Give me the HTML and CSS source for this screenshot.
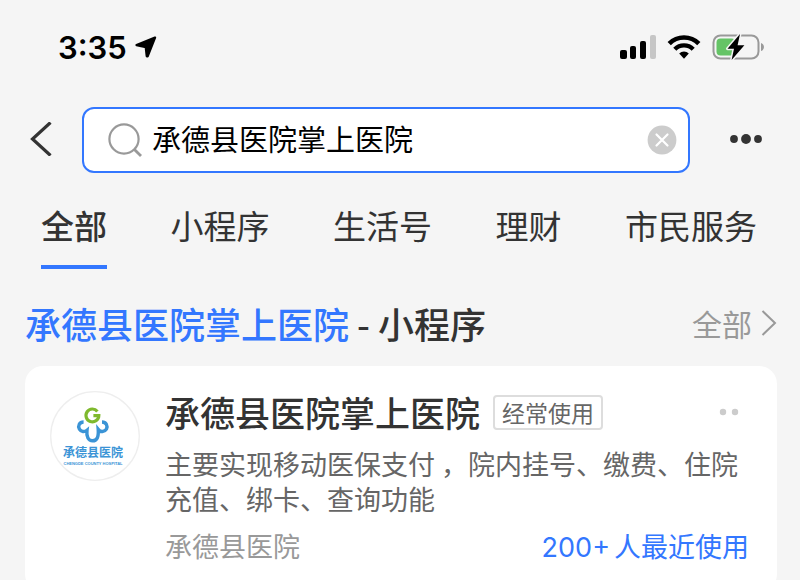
FILE: index.html
```
<!DOCTYPE html>
<html lang="zh-CN">
<head>
    <meta charset="UTF-8">
    <meta name="viewport" content="width=device-width, initial-scale=1.0">
    <title>承德县医院掌上医院 - 搜索</title>
    <link rel="stylesheet" href="styles.css">
</head>
<body>
<div class="app">
    <!-- 状态栏 -->
    <div class="status-bar">
        <div class="status-time">
            <span>3:35</span>
            <svg width="22" height="22" viewBox="0 0 22 22">
                <path d="M20 1.6 L1.6 9 L10.8 11.2 L11.8 20.2 L12.6 20.2 Z" fill="#000" stroke="#000" stroke-width="2.4" stroke-linejoin="round"/>
            </svg>
        </div>
        <div class="status-icons">
            <svg width="36" height="26" viewBox="0 0 36 26">
                <rect x="0" y="16" width="7" height="9" rx="2"/>
                <rect x="10" y="12" width="6" height="13" rx="2"/>
                <rect x="20" y="7" width="6" height="18" rx="2"/>
                <rect x="30" y="1" width="6" height="24" rx="2" fill="#c6c6c6"/>
            </svg>
            <svg width="34" height="26" viewBox="0 0 34 26">
                <path d="M2.2 9.6 A21 21 0 0 1 31.8 9.6" fill="none" stroke="#000" stroke-width="4.6"/>
                <path d="M7.8 15.2 A13 13 0 0 1 26.2 15.2" fill="none" stroke="#000" stroke-width="4.4"/>
                <path d="M12.2 19.6 A6.8 6.8 0 0 1 21.8 19.6 L17 24.8 Z"/>
            </svg>
            <svg width="52" height="28" viewBox="0 0 52 28">
                <rect x="1.5" y="2.5" width="45" height="23" rx="7" fill="none" stroke="#999" stroke-width="2"/>
                <path d="M49 10 Q52 11 52 14 Q52 17 49 18 Z" fill="#999"/>
                <rect x="4.5" y="5.5" width="19" height="17" rx="4" fill="#65c466"/>
                <path d="M28 1 L15.5 15.7 H22 L19.6 27 L32.4 12.3 H25.6 Z" fill="#000" stroke="#f5f5f5" stroke-width="3" stroke-linejoin="round" paint-order="stroke"/>
            </svg>
        </div>
    </div>

    <!-- 搜索栏 -->
    <form class="search-row">
        <button type="button" class="icon-button nav-button" aria-label="返回">
            <svg width="22" height="34" viewBox="0 0 22 34">
                <path d="M20.5 0.5 L2.5 17 L20.5 33.5" fill="none" stroke="#333" stroke-width="3.2"/>
            </svg>
        </button>
        <div class="search-box">
            <svg width="34" height="34" viewBox="0 0 34 34" fill="none" stroke="#999" stroke-width="2.2">
                <circle cx="16" cy="16" r="14.6"/>
                <path d="M26.4 26.4 L33 33" stroke-width="2.8"/>
            </svg>
            <input type="text" value="承德县医院掌上医院" aria-label="搜索">
            <button type="reset" class="icon-button" aria-label="清除">
                <svg width="30" height="30" viewBox="0 0 30 30">
                    <circle cx="15" cy="15" r="14.4" fill="#ccc"/>
                    <path d="M9.5 9.5 L20.5 20.5 M20.5 9.5 L9.5 20.5" stroke="#fff" stroke-width="2.2" stroke-linecap="round"/>
                </svg>
            </button>
        </div>
        <button type="button" class="icon-button nav-button" aria-label="更多">
            <svg width="32" height="12" viewBox="0 0 32 12" fill="#333">
                <circle cx="4" cy="6" r="3.9"/>
                <circle cx="16" cy="6" r="4.9"/>
                <circle cx="28" cy="6" r="3.9"/>
            </svg>
        </button>
    </form>

    <!-- 分类 -->
    <nav class="tabs">
        <button type="button" class="tab active">全部</button>
        <button type="button" class="tab">小程序</button>
        <button type="button" class="tab">生活号</button>
        <button type="button" class="tab">理财</button>
        <button type="button" class="tab">市民服务</button>
    </nav>

    <!-- 搜索结果 -->
    <section class="results">
        <div class="section-head">
            <h2><span class="keyword">承德县医院掌上医院</span> - 小程序</h2>
            <a href="#" class="more">全部
                <svg width="16" height="26" viewBox="0 0 16 26">
                    <path d="M1.5 1 L14 13 L1.5 25" fill="none" stroke="#999" stroke-width="2"/>
                </svg>
            </a>
        </div>

        <article class="card">
            <svg class="logo" width="90" height="90" viewBox="0 0 90 90">
                <circle cx="45" cy="45" r="44.3" fill="#fff" stroke="#eee" stroke-width="1.3"/>
                <path d="M47.4 20.4 A6.4 6.4 0 1 0 48.8 24.6 H43.4" fill="none" stroke="#7fb92d" stroke-width="3.2"/>
                <path d="M33.6 31 C29.4 31 27.6 35 29.4 38.2 C31 41 34.6 41.2 37 39.2 C36.2 46 38.4 49.8 42.6 49.8 C46.8 49.8 48.8 46.4 48.2 38.4 C50.6 41.4 54.6 41.2 56.4 38.2 C58 35 56.2 31 52 31" fill="none" stroke="#3b94d6" stroke-width="3.4"/>
                <text class="logo-name" x="43" y="66" text-anchor="middle">承德县医院</text>
                <text class="logo-sub" x="43" y="74" text-anchor="middle">CHENGDE COUNTY HOSPITAL</text>
            </svg>
            <div class="card-body">
                <div class="card-title">
                    <h3>承德县医院掌上医院</h3>
                    <span class="badge">经常使用</span>
                    <button type="button" class="icon-button card-more" aria-label="更多操作">
                        <svg width="20" height="8" viewBox="0 0 20 8" fill="#ccc">
                            <circle cx="4" cy="4" r="3.2"/>
                            <circle cx="16" cy="4" r="3.2"/>
                        </svg>
                    </button>
                </div>
                <p class="desc">主要实现移动医保支付 ，院内挂号、缴费、住院充值、绑卡、查询功能</p>
                <div class="card-foot">
                    <span>承德县医院</span>
                    <span class="usage"><span class="count">200+</span>人最近使用</span>
                </div>
            </div>
        </article>
    </section>
</div>
</body>
</html>
```
FILE: styles.css
```
* {
    box-sizing: border-box;
}
body {
    margin: 0;
    background-color: #f5f5f5;
    color: #333;
    font-family: "Noto Sans CJK SC", sans-serif;
}
h2, h3, p {
    margin: 0;
}
svg {
    display: block;
    flex: none;
}
button, input {
    padding: 0;
    border: none;
    background: none;
    color: inherit;
    font-family: inherit;
}
.app {
    height: 100vh;
    overflow: hidden;
}
.icon-button {
    flex: none;
    cursor: pointer;
}

/* 状态栏 */
.status-bar {
    display: flex;
    align-items: center;
    justify-content: space-between;
    height: 94px;
    margin-bottom: 13px;
    padding: 0 36px 0 58px;
}
.status-time {
    display: flex;
    align-items: center;
    gap: 8px;
    color: #000;
    font-family: Inter, sans-serif;
    font-size: 31px;
    font-weight: 600;
}
.status-icons {
    display: flex;
    align-items: center;
    gap: 11px;
}

/* 搜索栏 */
.search-row {
    display: flex;
    align-items: center;
    padding: 0 38px 0 30px;
}
.nav-button {
    padding-bottom: 3px;
}
.search-box {
    display: flex;
    flex: 1;
    align-items: center;
    gap: 10px;
    height: 66px;
    margin: 0 40px 0 30px;
    padding: 0 11px 0 24px;
    border: 2px solid #3377ff;
    border-radius: 12px;
    background-color: #fff;
}
.search-box input {
    flex: 1;
    min-width: 0;
    padding-bottom: 4px;
    color: #000;
    font-size: 29px;
    outline: none;
}

/* 分类 */
.tabs {
    display: flex;
    justify-content: space-between;
    margin: 30px 43px 32px 41px;
}
.tab {
    height: 66px;
    padding-bottom: 18px;
    border-bottom: 4px solid transparent;
    font-size: 33px;
    line-height: 44px;
    white-space: nowrap;
    cursor: pointer;
}
.tab.active {
    border-color: #3377ff;
    font-weight: 500;
}

/* 搜索结果 */
.results {
    padding: 0 23px 0 25px;
}
.section-head {
    display: flex;
    align-items: center;
    justify-content: space-between;
    margin-bottom: 21px;
}
h2, h3 {
    font-size: 36px;
    font-weight: 500;
    line-height: 44px;
    white-space: nowrap;
}
h3 {
    font-size: 35px;
}
.keyword {
    color: #3377ff;
}
.more {
    display: flex;
    align-items: center;
    gap: 9px;
    color: #999;
    font-size: 30px;
    line-height: 44px;
    text-decoration: none;
}
.card {
    display: flex;
    align-items: flex-start;
    gap: 25px;
    padding: 24px 28px 26px 25px;
    border-radius: 18px;
    background-color: #fff;
}
.logo {
    margin-top: 1px;
}
.logo-name {
    fill: #3b94d6;
    font-size: 12px;
    font-weight: 700;
}
.logo-sub {
    fill: #3b94d6;
    font-family: "Liberation Sans", sans-serif;
    font-size: 4px;
    font-weight: 700;
}
.card-body {
    flex: 1;
    min-width: 0;
}
.card-title {
    display: flex;
    align-items: center;
    gap: 13px;
}
.badge {
    padding: 0 7px;
    border: 2px solid #ddd;
    border-radius: 4px;
    color: #666;
    font-size: 23px;
    line-height: 31px;
    white-space: nowrap;
}
.card-more {
    margin-left: auto;
    margin-right: 10px;
}
.desc {
    margin: 12px 0;
    color: #666;
    font-size: 27px;
    line-height: 35px;
}
.card-foot {
    display: flex;
    justify-content: space-between;
    color: #999;
    font-size: 27px;
    line-height: 36px;
}
.usage {
    color: #3377ff;
}
.count {
    margin-right: 4px;
    font-family: Inter, sans-serif;
}
```
